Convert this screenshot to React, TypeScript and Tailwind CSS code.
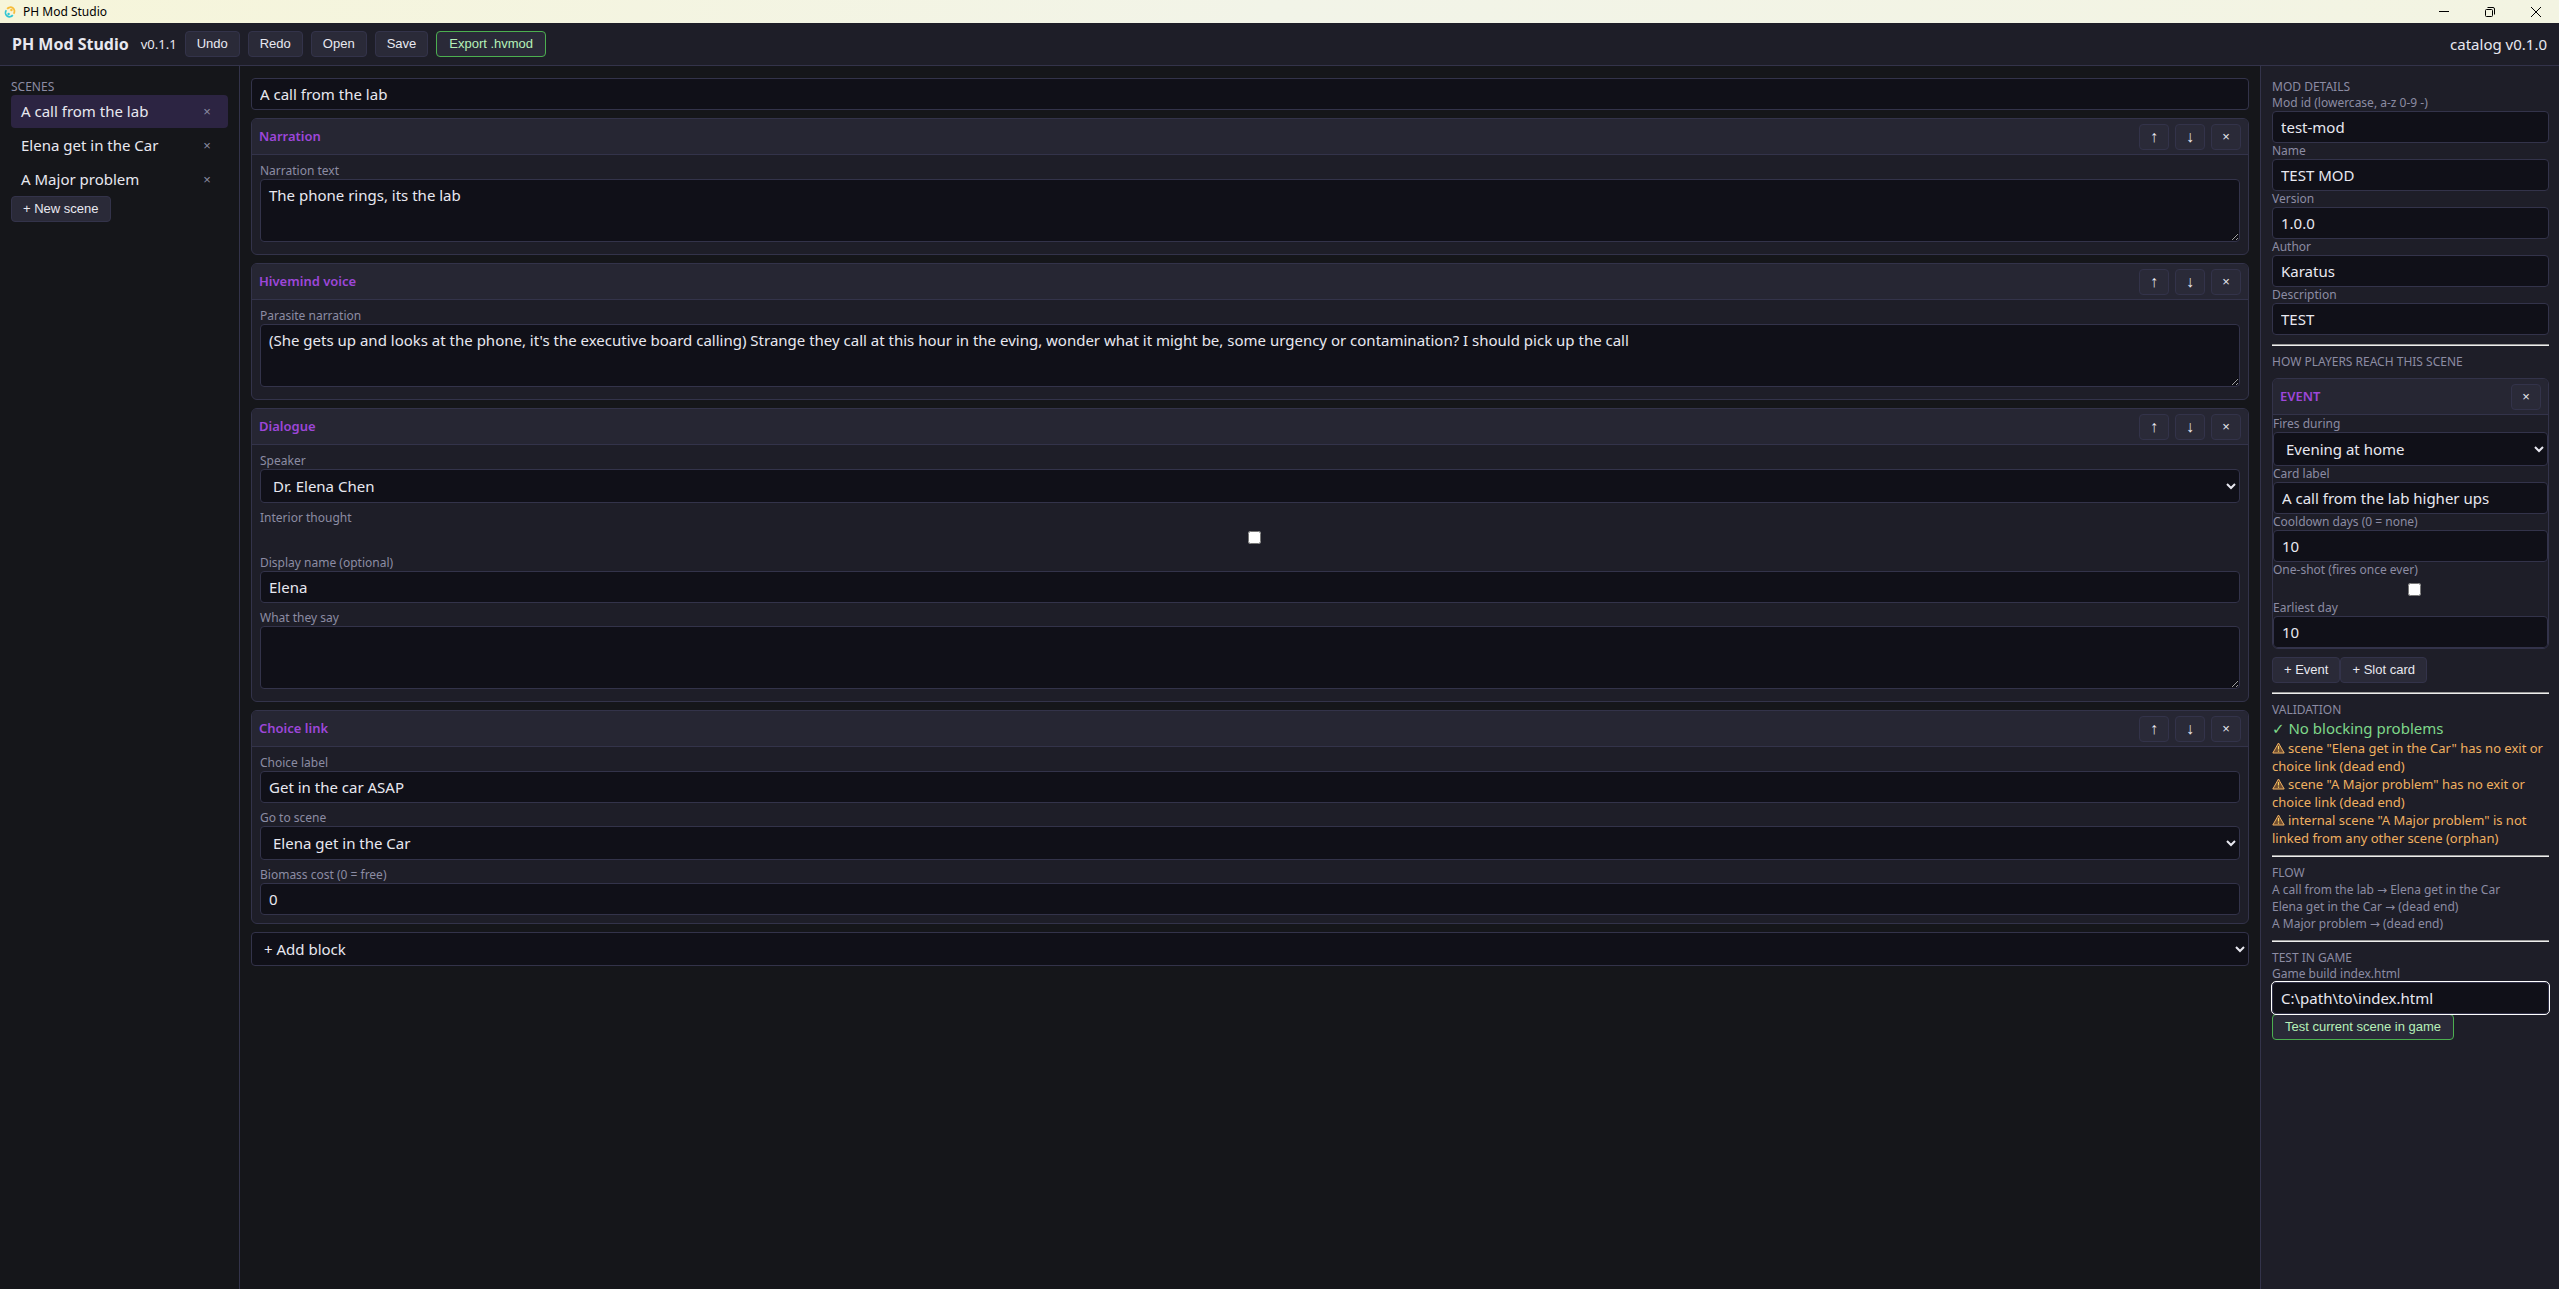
import { useState } from "react";
import type { ReactNode } from "react";

interface Scene {
  id: string;
  title: string;
}

const initialScenes: Scene[] = [
  { id: "call", title: "A call from the lab" },
  { id: "car", title: "Elena get in the Car" },
  { id: "problem", title: "A Major problem" },
];

const warnings = [
  'scene "Elena get in the Car" has no exit or choice link (dead end)',
  'scene "A Major problem" has no exit or choice link (dead end)',
  'internal scene "A Major problem" is not linked from any other scene (orphan)',
];

const flow = [
  "A call from the lab → Elena get in the Car",
  "Elena get in the Car → (dead end)",
  "A Major problem → (dead end)",
];

const btn =
  "h-[26px] rounded border border-[#33334a] bg-[#2a2a38] px-[11px] font-['Liberation_Sans',Arial,sans-serif] text-[13px] leading-4 text-[#e8e8f0] whitespace-nowrap";
const btnPrimary =
  "h-[26px] rounded border border-[#4caf50] bg-[#2a2a38] px-3 font-['Liberation_Sans',Arial,sans-serif] text-[13px] leading-4 text-[#b6f0b8] whitespace-nowrap";
const iconBtn =
  "flex h-[26px] w-[30px] items-center justify-center rounded border border-[#33334a] bg-[#2a2a38] font-['Liberation_Sans',Arial,sans-serif] leading-4 text-[#e8e8f0]";
const control =
  "block w-full rounded border border-[#33334a] bg-[#101018] px-2 text-[15px] text-[#e8e8f0]";
const labelText = "block text-[12px] leading-4 text-[#8c8ca3]";

const TextField = ({ id, label, value }: { id: string; label: string; value: string }) => (
  <div>
    <label htmlFor={id} className={labelText}>{label}</label>
    <input id={id} type="text" defaultValue={value} className={`${control} h-8`} />
  </div>
);

const AreaField = ({ id, label, value }: { id: string; label: string; value: string }) => (
  <div className="pb-1">
    <label htmlFor={id} className={labelText}>{label}</label>
    <textarea
      id={id}
      defaultValue={value}
      className={`${control} h-[63px] resize-y py-[5px] leading-[21px]`}
    />
  </div>
);

const SelectField = ({ id, label, options }: { id: string; label: string; options: string[] }) => (
  <div>
    <label htmlFor={id} className={labelText}>{label}</label>
    <select id={id} className={`${control} h-[34px]`}>
      {options.map((option) => (
        <option key={option}>{option}</option>
      ))}
    </select>
  </div>
);

const CheckField = ({ id, label }: { id: string; label: string }) => (
  <div>
    <label htmlFor={id} className={labelText}>{label}</label>
    <div className="flex h-[22px] items-center justify-center pl-2">
      <input id={id} type="checkbox" className="size-[13px]" />
    </div>
  </div>
);

const Block = ({ title, children }: { title: string; children: ReactNode }) => (
  <section className="overflow-hidden rounded-md border border-[#33334a] bg-[#1e1e28]">
    <header className="flex h-9 items-center justify-between border-b border-[#33334a] bg-[#262633] px-[7px]">
      <h2 className="text-[13px] font-semibold text-[#9d46d9]">{title}</h2>
      <div className="flex gap-[6px]">
        <button type="button" aria-label="Move up" className={`${iconBtn} text-[16px]`}>↑</button>
        <button type="button" aria-label="Move down" className={`${iconBtn} text-[16px]`}>↓</button>
        <button type="button" aria-label="Remove" className={`${iconBtn} text-[13px]`}>×</button>
      </div>
    </header>
    <div className="flex flex-col gap-[7px] p-2">{children}</div>
  </section>
);

const Rule = () => (
  <hr className="my-2 border-0 border-t border-b border-t-[#9a9a9a] border-b-[#eeeeee]" />
);

const SectionTitle = ({ children }: { children: ReactNode }) => (
  <h2 className="text-[12px] leading-4 text-[#8c8ca3] uppercase">{children}</h2>
);

const WarningIcon = () => (
  <svg viewBox="0 0 13 12" className="mr-[3px] inline-block h-3 w-[13px] align-[-1px]" aria-hidden="true">
    <path
      d="M6.5 1L12.2 11H0.8Z"
      fill="#6e4c30"
      stroke="#f0b060"
      strokeLinejoin="round"
    />
    <path d="M6.5 4v3.6M6.5 8.6v1.2" stroke="#f8d060" strokeWidth="1.2" />
  </svg>
);

const TitleBar = () => (
  <div className="flex h-[23px] shrink-0 items-center bg-linear-to-r from-[#f6f5da] via-[#f2f4e8] to-[#f3f4e2] pl-[3px] text-black">
    <svg viewBox="0 0 16 16" className="size-[14px]" fill="none" strokeWidth="2">
      <path d="M4.8 4.4A4.6 4.6 0 1 1 12.2 10" stroke="#f7bd3a" />
      <path d="M11.2 11.6A4.6 4.6 0 1 1 3.8 6" stroke="#31c6d4" />
      <circle cx="9.6" cy="5.8" r="1.4" fill="#f7bd3a" />
      <circle cx="6.4" cy="10.2" r="1.4" fill="#31c6d4" />
    </svg>
    <span className="ml-[6px] text-[12px]">PH Mod Studio</span>
    <div className="ml-auto flex">
      <button type="button" aria-label="Minimize" className="flex h-[23px] w-[46px] items-center justify-center">
        <svg viewBox="0 0 10 10" className="size-[10px]" stroke="currentColor">
          <path d="M0 4.5h10" />
        </svg>
      </button>
      <button type="button" aria-label="Restore" className="flex h-[23px] w-[46px] items-center justify-center">
        <svg viewBox="0 0 10 10" className="size-[10px]" fill="none" stroke="currentColor">
          <rect x="0.5" y="2.5" width="7" height="7" rx="1" />
          <path d="M2.5 0.5H8a1.5 1.5 0 0 1 1.5 1.5V7.5" />
        </svg>
      </button>
      <button type="button" aria-label="Close" className="flex h-[23px] w-[46px] items-center justify-center">
        <svg viewBox="0 0 10 10" className="size-[10px]" stroke="currentColor">
          <path d="M0 0l10 10M10 0L0 10" />
        </svg>
      </button>
    </div>
  </div>
);

const App = () => {
  const [scenes] = useState<Scene[]>(initialScenes);
  const [current, setCurrent] = useState("call");

  return (
    <div className="flex min-h-screen flex-col bg-[#15161a] font-['Noto_Sans','DejaVu_Sans',sans-serif] text-[15px] leading-[21px] text-[#e8e8f0]">

      <TitleBar />

      <header className="flex items-center gap-2 border-b border-[#33334a] bg-[#1e1e28] px-3 py-2">
        <h1 className="mr-1 text-[16px] font-bold">PH Mod Studio</h1>
        <span className="text-[13px]">v0.1.1</span>
        <button type="button" className={btn}>Undo</button>
        <button type="button" className={btn}>Redo</button>
        <button type="button" className={btn}>Open</button>
        <button type="button" className={btn}>Save</button>
        <button type="button" className={btnPrimary}>Export .hvmod</button>
        <span className="ml-auto">catalog v0.1.0</span>
      </header>

      <div className="flex grow">

        {/* Scene list */}
        <aside className="w-60 shrink-0 border-r border-[#33334a] px-[11px] py-[13px]">
          <SectionTitle>Scenes</SectionTitle>
          <ul className="flex flex-col gap-px">
            {scenes.map((scene) => (
              <li
                key={scene.id}
                className={`flex h-[33px] items-center justify-between rounded px-[10px] ${
                  scene.id === current ? "bg-[#2c2442]" : ""
                }`}
              >
                <button type="button" onClick={() => setCurrent(scene.id)}>{scene.title}</button>
                <button
                  type="button"
                  aria-label={`Delete ${scene.title}`}
                  className="w-[22px] font-['Liberation_Sans',Arial,sans-serif] text-[13px] text-[#8c8ca3]"
                >
                  ×
                </button>
              </li>
            ))}
          </ul>
          <button type="button" className={btn}>+ New scene</button>
        </aside>

        {/* Block editor */}
        <main className="flex min-w-0 grow flex-col gap-2 px-[11px] py-3">
          <input
            type="text"
            aria-label="Scene title"
            defaultValue="A call from the lab"
            className={`${control} h-8`}
          />

          <Block title="Narration">
            <AreaField id="narration" label="Narration text" value="The phone rings, its the lab" />
          </Block>

          <Block title="Hivemind voice">
            <AreaField
              id="hivemind"
              label="Parasite narration"
              value="(She gets up and looks at the phone, it's the executive board calling) Strange they call at this hour in the eving, wonder what it might be, some urgency or contamination? I should pick up the call"
            />
          </Block>

          <Block title="Dialogue">
            <SelectField id="speaker" label="Speaker" options={["Dr. Elena Chen"]} />
            <CheckField id="interior" label="Interior thought" />
            <TextField id="display-name" label="Display name (optional)" value="Elena" />
            <AreaField id="say" label="What they say" value="" />
          </Block>

          <Block title="Choice link">
            <TextField id="choice-label" label="Choice label" value="Get in the car ASAP" />
            <SelectField id="goto" label="Go to scene" options={["Elena get in the Car", "A Major problem"]} />
            <TextField id="biomass" label="Biomass cost (0 = free)" value="0" />
          </Block>

          <select aria-label="Add block" className={`${control} h-[34px]`}>
            <option>+ Add block</option>
            <option>Narration</option>
            <option>Hivemind voice</option>
            <option>Dialogue</option>
            <option>Choice link</option>
          </select>
        </main>

        {/* Mod settings */}
        <aside className="w-[299px] shrink-0 border-l border-[#33334a] bg-[#1e1e28] py-[13px] pr-[10px] pl-[11px]">
          <section className="pb-px">
            <SectionTitle>Mod details</SectionTitle>
            <TextField id="mod-id" label="Mod id (lowercase, a-z 0-9 -)" value="test-mod" />
            <TextField id="mod-name" label="Name" value="TEST MOD" />
            <TextField id="mod-version" label="Version" value="1.0.0" />
            <TextField id="mod-author" label="Author" value="Karatus" />
            <TextField id="mod-description" label="Description" value="TEST" />
          </section>

          <Rule />

          <section className="pb-px">
            <SectionTitle>How players reach this scene</SectionTitle>
            <div className="my-2 overflow-hidden rounded-md border border-[#33334a]">
              <header className="flex h-9 items-center justify-between border-b border-[#33334a] bg-[#262633] px-[7px]">
                <h3 className="text-[13px] font-semibold text-[#9d46d9]">EVENT</h3>
                <button type="button" aria-label="Remove event" className={`${iconBtn} text-[13px]`}>×</button>
              </header>
              <div className="pt-px">
                <SelectField id="fires" label="Fires during" options={["Evening at home"]} />
                <TextField id="card-label" label="Card label" value="A call from the lab higher ups" />
                <TextField id="cooldown" label="Cooldown days (0 = none)" value="10" />
                <CheckField id="one-shot" label="One-shot (fires once ever)" />
                <TextField id="earliest" label="Earliest day" value="10" />
              </div>
            </div>
            <div className="flex">
              <button type="button" className={btn}>+ Event</button>
              <button type="button" className={btn}>+ Slot card</button>
            </div>
          </section>

          <Rule />

          <section>
            <SectionTitle>Validation</SectionTitle>
            <p className="text-[#7fd88a]">✓ No blocking problems</p>
            {warnings.map((warning) => (
              <p key={warning} className="text-[13px] leading-[18px] text-[#f0b060]">
                <WarningIcon />
                {warning}
              </p>
            ))}
          </section>

          <Rule />

          <section>
            <SectionTitle>Flow</SectionTitle>
            {flow.map((line) => (
              <p key={line} className="text-[12px] leading-[17px] text-[#8c8ca3]">{line}</p>
            ))}
          </section>

          <Rule />

          <section>
            <SectionTitle>Test in game</SectionTitle>
            <label htmlFor="build" className={labelText}>Game build index.html</label>
            <input
              id="build"
              type="text"
              defaultValue="C:\path\to\index.html"
              className={`${control} h-8 outline-1 outline-white`}
            />
            <button type="button" className={btnPrimary}>Test current scene in game</button>
          </section>
        </aside>

      </div>
    </div>
  );
};

export default App;
